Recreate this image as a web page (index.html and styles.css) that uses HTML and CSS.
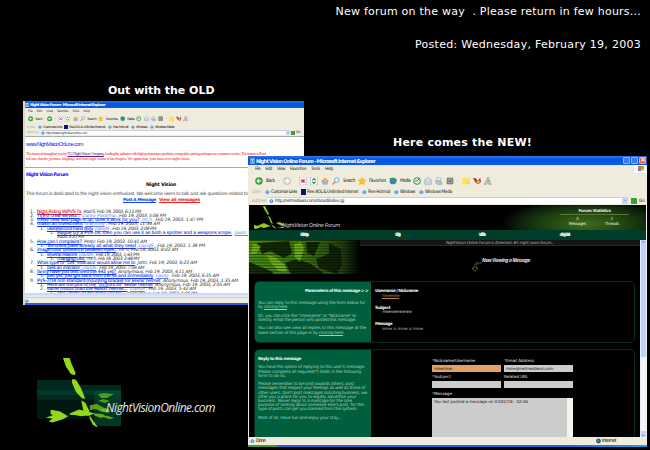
FILE: index.html
```html
<!DOCTYPE html>
<html lang="en">
<head>
<meta charset="utf-8">
<title>Night Vision Online</title>
<link rel="stylesheet" href="styles.css">
</head>
<body>
<svg class="defs" width="0" height="0">
  <defs>
    <symbol id="ie" viewBox="0 0 10 10"><rect x="1" width="8" height="10" fill="#e8f2fc"/><circle cx="4.8" cy="5.3" r="3" fill="none" stroke="#287ed0" stroke-width="1.8"/><path d="M2 5.5h6" stroke="#287ed0" stroke-width="1.3"/></symbol>
    <symbol id="back" viewBox="0 0 10 10"><circle cx="5" cy="5" r="4.7" fill="#36a23a"/><path d="M8 5H3M5.2 2.6L2.8 5l2.4 2.4" fill="none" stroke="#fff" stroke-width="1.4"/></symbol>
    <symbol id="fwd" viewBox="0 0 10 10"><circle cx="5" cy="5" r="4.4" fill="#dcdcd4" stroke="#aaa" stroke-width=".7"/><path d="M2 5h5M5 2.6L7.4 5 5 7.4" fill="none" stroke="#fff" stroke-width="1.4"/></symbol>
    <symbol id="stop" viewBox="0 0 10 10"><path d="M1 0h8v10H1z" fill="#fff" stroke="#8aa6d8" stroke-width=".7"/><path d="M3 3l4 4M7 3L3 7" stroke="#d8301c" stroke-width="1.8"/></symbol>
    <symbol id="refresh" viewBox="0 0 10 10"><path d="M1 0h8v10H1z" fill="#fff" stroke="#8aa6d8" stroke-width=".7"/><path d="M3 4l2-2 2 2M7 6L5 8 3 6" fill="none" stroke="#2a9a38" stroke-width="1.7"/></symbol>
    <symbol id="home" viewBox="0 0 10 10"><path d="M1.5 5h7v4.5h-7z" fill="#8fb5ea"/><path d="M0 5.5L5 .8l5 4.7-2 1-3-3-3 3z" fill="#e89a34"/></symbol>
    <symbol id="find" viewBox="0 0 10 10"><circle cx="6" cy="3.8" r="3" fill="#dcecfb" stroke="#7c9cc4"/><path d="M3.8 6L.8 9.4" stroke="#c87a44" stroke-width="1.6"/></symbol>
    <symbol id="star" viewBox="0 0 10 10"><path d="M5 .2l1.4 3.2 3.5.3-2.7 2.3.9 3.6L5 7.8 1.9 9.6l.9-3.6L.1 3.7l3.5-.3z" fill="#fcc62e" stroke="#d89814" stroke-width=".5"/></symbol>
    <symbol id="media" viewBox="0 0 10 10"><circle cx="5" cy="5" r="4.2" fill="#3484c8"/><path d="M0 2l6-1-1 5zM5 6l5-4-1 4z" fill="#2c9c4a"/></symbol>
    <symbol id="hist" viewBox="0 0 10 10"><circle cx="5" cy="5" r="4" fill="#e2f4e4" stroke="#3a9a58" stroke-width="1.3"/><path d="M7.5 2.5L5 5H2.5" fill="none" stroke="#2c7a48" stroke-width="1.2"/></symbol>
    <symbol id="mail" viewBox="0 0 10 10"><path d="M1 4l4-3.5L9 4v5H1z" fill="#d4e6fa" stroke="#7499cb" stroke-width=".8"/><path d="M1 4l4 3 4-3" fill="none" stroke="#e1b260"/></symbol>
    <symbol id="print" viewBox="0 0 10 10"><path d="M2.5 0L7 1v4l-4.500-1z" fill="#e8effa" stroke="#8b9bb5" stroke-width=".6"/><path d="M1 4l7 1.500 1 3.500-6 .5L0 6.500z" fill="#b6bfd2" stroke="#8b9bb5" stroke-width=".6"/></symbol>
    <symbol id="edit" viewBox="0 0 10 10"><path d="M1.500 1.500h7v7h-7z" fill="#bbb" stroke="#555"/><path d="M3 4h4M3 6h4" stroke="#444"/></symbol>
    <symbol id="note" viewBox="0 0 10 10"><path d="M0 1h10v6L7 9.500H0z" fill="#fbe265"/><path d="M10 7H7v2.500" fill="#e4b42c"/></symbol>
    <symbol id="bird" viewBox="0 0 10 10"><path d="M0 1l4 1 2 3 3-4 1 5-3 3-4-2z" fill="#b8342a"/><circle cx="6.500" cy="6" r="2" fill="#f0bc38"/></symbol>
    <symbol id="man" viewBox="0 0 10 10"><path d="M4 1h2v3l3 5H6L5 6 3 9H0l4-5zM2 5h6" fill="none" stroke="#858585" stroke-width=".9"/></symbol>
    <symbol id="plant" viewBox="0 0 180 185">
      <g fill="#93d81d">
        <path d="M47 0h18l4 13 12 27-3 6-10-3-13-20z"/><path d="M72 56l10 2 13 22 12 29-9-1-16-17-11-25z"/>
        <path d="M96 113l11 7 10 20 3 14-10 1-9-16z"/><path d="M65 149l25-11 20 5 23 6-13 4-24 3-17-3-14-1z"/>
        <path d="M14 139l24 4 23 13-14 8-28 9-10-3 10-8-18-2 20-7-7-2z"/><path d="M119 155l14 20 8 12-14-8-9-18z"/>
        <path d="M119 127l19-4 16 9 18 6-5 7-19-3-14-5-15 3z" opacity=".65"/><path d="M131 149l22 1 10 7-15 4-19-8z" opacity=".7"/>
        <path d="M162 154l22 6-12 4-15-5z" opacity=".65"/>
      </g>
    </symbol>
  </defs>
</svg>

<main class="desk">
  <header class="notice">
    <p><span data-w="305.500">New forum on the way&nbsp; . Please return in few hours...</span></p>
    <p><span data-w="226">Posted: Wednesday, February 19, 2003</span></p>
  </header>
  <h2 class="cap cap-old"><span data-w="106.500">Out with the OLD</span></h2>
  <h2 class="cap cap-new"><span data-w="139">Here comes the NEW!</span></h2>

  <section class="win old">
    <div class="title"><svg><use href="#ie"/></svg><span data-w="75">Night Vision Forum - Microsoft Internet Explorer</span></div>
    <div class="chrome">
      <div class="menu"><span>File</span><span>Edit</span><span>View</span><span data-w="11">Favorites</span><span>Tools</span><span>Help</span></div>
      <div class="tools">
        <svg><use href="#back"/></svg><b data-w="7">Back</b><i>·</i><svg><use href="#back"/></svg><i>·</i><svg><use href="#stop"/></svg><svg><use href="#refresh"/></svg><svg><use href="#home"/></svg><svg><use href="#find"/></svg><b data-w="9">Search</b><svg><use href="#star"/></svg><b data-w="12">Favorites</b><svg><use href="#media"/></svg><b data-w="7">Media</b><svg><use href="#hist"/></svg><svg><use href="#mail"/></svg><svg><use href="#print"/></svg><svg><use href="#edit"/></svg><i>·</i><svg><use href="#note"/></svg><svg><use href="#bird"/></svg><svg><use href="#man"/></svg>
      </div>
      <div class="links"><em>Links</em><svg><use href="#ie"/></svg><span data-w="19">Customize Links</span><u></u><span data-w="36">Free AOL &amp; Unlimited Internet</span><svg><use href="#ie"/></svg><span data-w="15">Free Hotmail</span><svg><use href="#ie"/></svg><span data-w="11">Windows</span><svg><use href="#ie"/></svg><span data-w="19">Windows Media</span></div>
      <div class="addr"><em>Address</em><div class="url"><svg><use href="#ie"/></svg><span data-w="41">http://www.nightvisiononline.com</span></div><s>⌄</s><q></q><small>Go</small></div>
    </div>
    <div class="top-frame">
      <h3><span data-w="57">www.NightVisionOnLine.com</span></h3>
      <p><span data-w="240">The forum is brought to you by <a>TG Night Vision Company</a>, leading the industry with high performance products, competitive pricing and supreme customer service. The forum will not</span></p>
      <p><span data-w="164">tolerate slander, profane language and non night vision related topics. We appreciate your interest in night vision.</span></p>
    </div>
    <div class="main-frame">
      <h3><span data-w="42">Night Vision Forum</span></h3>
      <h4><span data-w="30">Night Vision</span></h4>
      <p class="intro"><span data-w="222">This forum is dedicated to the night vision enthusiast. We welcome users to talk and ask questions related to</span></p>
      <p class="acts"><a data-w="33">Post A Message</a><a class="red" data-w="41">View all messages</a></p>
      <ol class="thread">
        <li><b>1.</b><span data-w="104"><a class="red">Night Riding W/PVS-7a</a>&nbsp; Rod S, Feb 19, 2003, 6:13 PM</span></li>
        <li><b>2.</b><span data-w="129"><a>TVS-2 crew served...</a>&nbsp; <a class="who">Danny Postema</a> , Feb 19, 2003, 5:06 PM</span></li>
        <li><b>3.</b><span data-w="166"><a>USNV new web page is up, does it work for you?</a>&nbsp; <a class="who">mr h</a> , Feb 19, 2003, 1:47 PM</span></li>
        <li><b>4.</b><span data-w="123"><a>makin an investment</a>&nbsp; <a class="who">d whitley</a> , Feb 19, 2003, 11:34 AM</span></li>
        <li class="l2"><b>1.</b><span data-w="109"><a>used/second hand NVG</a>&nbsp; <a class="who">DavidS</a> , Feb 19, 2003, 2:08 PM</span></li>
        <li class="l3"><b>1.</b><span data-w="194"><a>Maybe try a PVS-14, then you can use it as both a spotter and a weapons scope.</a>&nbsp; <a class="who">Jason H</a></span></li>
        <li class="l3"><b></b><span data-w="27">2003, 2:21 PM</span></li>
        <li><b>5.</b><span data-w="110"><a>How can I complaint?</a>&nbsp; Peter, Feb 19, 2003, 10:41 AM</span></li>
        <li class="l2"><b>1.</b><span data-w="158"><a>Terrorists have already all what they need</a>&nbsp; <a class="who">DavidS</a> , Feb 19, 2003, 1:39 PM</span></li>
        <li><b>6.</b><span data-w="141"><a>image color difference between eyes..</a>&nbsp; mr h, Feb 19, 2003, 8:02 AM</span></li>
        <li class="l2"><b>1.</b><span data-w="92"><a>several reasons</a>&nbsp; <a class="who">DavidS</a> , Feb 19, 2003, 1:43 PM</span></li>
        <li class="l3"><b>1.</b><span data-w="82"><a>changing color..</a>&nbsp; mr h, Feb 19, 2003, 2:48 PM</span></li>
        <li><b>7.</b><span data-w="160"><a>What type of "ON" indicator would allow me to</a>&nbsp; John, Feb 19, 2003, 6:23 AM</span></li>
        <li class="l2"><b>1.</b><span data-w="97"><a>best an indicator</a>&nbsp; <a class="who">DavidS</a> , Feb 19, 2003, 7:04 AM</span></li>
        <li><b>8.</b><span data-w="155"><a>fanny have you text fired the 442 yet?</a>&nbsp; Anonymous, Feb 19, 2003, 4:11 AM</span></li>
        <li class="l2"><b>1.</b><span data-w="172"><a>Just yet, just got back from the SS and immediately</a>&nbsp; <a class="who">Lanny</a> , Feb 19, 2003, 6:35 AM</span></li>
        <li><b>9.</b><span data-w="201"><a>PVS-7/14 non standard mounting bracket for kevlar helmet</a>&nbsp; Anonymous, Feb 19, 2003, 1:35 AM</span></li>
        <li class="l2"><b>1.</b><span data-w="183"><a>Here are the pics of the "no front lid" kevlar helmet</a>&nbsp; Anonymous, Feb 19, 2003, 2:05 AM</span></li>
        <li class="l2"><b>2.</b><span data-w="149"><a>same mount than the PASGT helmet...</a>&nbsp; <a class="who">DavidS</a> , Feb 19, 2003, 5:42 AM</span></li>
        <li class="l3"><b>1.</b><span data-w="140"><a>They don't use the same one for...</a>&nbsp; Anonymous, Feb 19, 2003, 6:06 PM</span></li>
      </ol>
    </div>
    <div class="hscroll"></div>
    <div class="status"><svg><use href="#ie"/></svg></div>
  </section>

  <section class="win new">
    <div class="title"><svg><use href="#ie"/></svg><span data-w="119">Night Vision Online Forum - Microsoft Internet Explorer</span><div class="btns"><i></i><i></i><i class="x">×</i></div></div>
    <div class="chrome">
      <div class="menu"><span data-w="5.500">File</span><span data-w="6.500">Edit</span><span data-w="8">View</span><span data-w="16">Favorites</span><span data-w="9">Tools</span><span data-w="8">Help</span><div class="flag"><k></k><k></k><k></k><k></k></div></div>
      <div class="tools">
        <svg><use href="#back"/></svg><b data-w="9">Back</b><i>·</i><svg><use href="#fwd"/></svg><i></i><svg><use href="#stop"/></svg><svg><use href="#refresh"/></svg><svg><use href="#home"/></svg><svg><use href="#find"/></svg><b data-w="12">Search</b><svg><use href="#star"/></svg><b data-w="17">Favorites</b><svg><use href="#media"/></svg><b data-w="10">Media</b><svg><use href="#hist"/></svg><svg><use href="#mail"/></svg><svg><use href="#print"/></svg><svg><use href="#edit"/></svg><i>·</i><svg><use href="#note"/></svg><svg><use href="#bird"/></svg><svg><use href="#man"/></svg>
      </div>
      <div class="links"><em data-w="9">Links</em><svg><use href="#ie"/></svg><span data-w="26">Customize Links</span><u></u><span data-w="51">Free AOL &amp; Unlimited Internet</span><svg><use href="#ie"/></svg><span data-w="22">Free Hotmail</span><svg><use href="#ie"/></svg><span data-w="15">Windows</span><svg><use href="#ie"/></svg><span data-w="27">Windows Media</span></div>
      <div class="addr"><em data-w="14">Address</em><div class="url"><svg><use href="#ie"/></svg><span data-w="69">http://netmediasol.com/nboard/index.cgi</span></div><s>⌄</s><q></q><small>Go</small></div>
    </div>
    <div class="page">
      <div class="banner">
        <svg class="sprig" viewBox="0 0 38 25"><g fill="#8ccc22"><path d="M14 1h2l4 8-1 1-4-6zM19 11l2 1 3 7-2-1zM22 19l4 3 1 2-3-2zM8 21l7-3 4 2 3 1-7 2zM5 20l5 1 1 2-5 1-1-1zM27 18l4-1 5 3-3 1zM28 22l6 0 2 1-3 0z"/></g></svg>
        <span class="hand" data-w="58">NightVision Online Forum</span>
        <div class="stats"><p class="st"><span data-w="32">Forum Statistics</span></p><div><p>3<br><span data-w="17">Messages</span></p><p>2<br><span data-w="14">Threads</span></p></div></div>
      </div>
      <nav><span data-w="45">Home / View Messages</span><span data-w="36">Post New Message</span><span data-w="41">Website Information</span><span data-w="32">Advertising Info</span></nav>
      <div class="body">
        <div class="canvas">
          <div class="ticker"><span data-w="108">NightVision Online Forum is America's #1 night vision forum...</span></div>
          <div class="hero">
            <svg class="photo" viewBox="0 0 111 34"><defs><linearGradient id="g"><stop offset="0" stop-color="#4c9210"/><stop offset=".55" stop-color="#3a7010"/><stop offset=".83" stop-color="#234510"/><stop offset="1" stop-color="#000"/></linearGradient><pattern id="p" width="4" height="2.800" patternUnits="userSpaceOnUse"><path d="M0 .5h4" stroke="#000" stroke-width="1" opacity=".5"/></pattern></defs><path d="M0 0h111v34H0z" fill="url(#g)"/><path d="M8 3L40 1l3 12-8 5-14-7-8 3zM0 22l22 9 3 3H0zM36 23l12-4 14 5 14 10H42zM57 2h14l-6 14-7-3zM80 3l12 6 1 16-5 9-18-6-3-9 13-5z" fill="#0a1c02" opacity=".85"/><path d="M18 15l8 2 10 8 2 7-8-1-9-9zM45 4l7-2 3 6-4 14-5-4zM4 3l8 3-4 7-6 2z" fill="#7cc41c" opacity=".8"/><path d="M0 0h111v34H0z" fill="url(#p)"/></svg>
            <svg class="arrow" viewBox="0 0 12 10"><path d="M11 1Q5 0 5 6H7L4 9.500 1 6H3Q3 .5 7 .500" fill="none" stroke="#53651a" stroke-width=".9"/></svg>
            <span class="viewing" data-w="48">Now Viewing a Message</span>
          </div>
          <div class="panel p1">
            <div class="side">
              <h5><span data-w="63">Parameters of this message &gt; &gt;</span></h5>
              <p><span data-w="107">You can reply to this message using the form below for</span><br><span data-w="30">by <a>clicking here</a>.</span></p>
              <p><span data-w="98">Or, you can click the "Username" or "Nickname" to</span><br><span data-w="98">directly email the person who posted this message.</span></p>
              <p><span data-w="108">You can also see view all replies to this message at the</span><br><span data-w="86">lower section of this page or by <a>clicking here</a>.</span></p>
            </div>
            <div class="info">
              <h6><span data-w="43">Username / Nickname</span></h6><p><a data-w="17">minemine</a></p>
              <h6><span data-w="15">Subject</span></h6><p><span data-w="29">minemineminemine</span></p>
              <h6><span data-w="17">Message</span></h6><p><span data-w="41">mine is mine is mine</span></p>
            </div>
          </div>
          <div class="panel p2">
            <div class="side">
              <h5><span data-w="43">Reply to this message</span></h5>
              <p><span data-w="107">You have the option of replying to this user's message.</span><br><span data-w="103">Please complete all required(*) fields in the following</span><br><span data-w="28">form to do so.</span></p>
              <p><span data-w="96">Please remember to be kind towards others, post</span><br><span data-w="107">messages that respect your feelings as well as those of</span><br><span data-w="109">other users. Don't post messages soliciting business, we</span><br><span data-w="98">offer you a place for you to legally advertise your</span><br><span data-w="94">business. Never reply to a message for the sole</span><br><span data-w="106">purpose of ranting about someone else's post, for this</span><br><span data-w="99">type of posts can get you banned from the system.</span></p>
              <p><span data-w="83">Most of all, Have fun and enjoy your stay...</span></p>
            </div>
            <div class="form">
              <label><span data-w="43"><i>*</i>Nickname/Username</span><div class="in hot"><span data-w="18">minemine</span></div></label>
              <label><span data-w="30"><i>*</i>Email Address</span><div class="in"><span data-w="47">mine@netmediasol.com</span></div></label>
              <label><span data-w="19"><i>*</i>Subject</span><div class="in"></div></label>
              <label><span data-w="24">Related URL</span><div class="in"></div></label>
              <label class="wide"><span data-w="20"><i>*</i>Message</span><div class="area"><span data-w="94">You last posted a message on 03/02/18 - 02:06</span></div></label>
            </div>
          </div>
        </div>
        <div class="vscroll"><i>⌃</i><i>⌄</i></div>
      </div>
    </div>
    <div class="status"><svg><use href="#ie"/></svg><span data-w="9">Done</span><svg class="globe" viewBox="0 0 10 10"><circle cx="5" cy="5" r="4.800" fill="#174c94"/><path d="M2 2l4-1 1 3-3 4-2-2zM7 5l2 0-1 3z" fill="#37a043"/></svg><span data-w="14">Internet</span></div>
  </section>

  <div class="logo">
    <svg viewBox="0 0 84 69"><path d="M0 22h39v5h45v41H57V61H0z" fill="#00180f"/><path d="M0 22h39v5h45v15H0z" fill="#00281c"/><path d="M0 32h84v5H0z" fill="#00382a"/><path d="M57 33h27v35H57z" fill="#02553a" opacity=".5"/><path d="M61 36l6-1 10 1-7 4h-6zM61 43l5-2 7 2-5 2zM62 53l5-2 7 2-3 2z" fill="#4d9a1f"/><svg x="0" y="0" width="60" height="61.700"><use href="#plant"/></svg></svg>
    <span class="hand" data-w="109">NightVisionOnline.com</span>
  </div>
</main>
<script src="fit.js"></script>
</body>
</html>
```
FILE: fit.js
```js
// Track each line of text out or in so that it fills its declared measure.
document.querySelectorAll('[data-w]').forEach(function (el) {
  var want = parseFloat(el.dataset.w);
  var n = el.textContent.length;
  el.style.letterSpacing = '0px';
  var have = el.getBoundingClientRect().width;
  el.style.letterSpacing = ((want - have) / n).toFixed(4) + 'px';
});
```
FILE: styles.css
```css
* { box-sizing: border-box; }
body { margin: 0; background: #000; font-family: "DejaVu Sans", Verdana, sans-serif; }
h2, h3, h4, h5, h6, p, ol { margin: 0; padding: 0; font-weight: normal; }
svg { display: block; flex: none; overflow: visible; }
.defs { position: absolute; }
.desk { position: relative; width: 650px; height: 450px; overflow: hidden; white-space: nowrap; }
.desk i, .desk em { font-style: normal; }
.desk a { text-decoration: underline; }

.notice { padding: 3px 9px 0 0; text-align: right; color: #fff; font-size: 11px; line-height: 17px; }
.notice p + p { margin-top: 16px; }
.cap { position: absolute; color: #fff; font-size: 11px; line-height: 14px; font-weight: bold; }
.cap-old { left: 108px; top: 84px; }
.cap-new { left: 393px; top: 136px; }

.win { position: absolute; display: flex; flex-direction: column; overflow: hidden; }
.title { display: flex; align-items: center; flex: none; color: #fff; font-weight: bold; background: linear-gradient(#2a76ee, #0653dc 40%, #0a5cf0); }
.chrome { flex: none; background: #efecdd; color: #222; font-family: "DejaVu Sans Condensed", "DejaVu Sans", sans-serif; }
.chrome > div { display: flex; align-items: center; }
.tools b { font-weight: normal; }
.links u { background: #0a1478; }
.addr .url { display: flex; align-items: center; flex: 1; height: 100%; background: #fff; border-top: 1px solid #c8d0d8; }
.addr s { text-decoration: none; background: #c4d4fa; color: #446; height: 100%; text-align: center; overflow: hidden; }
.addr q { background: #35a03c; quotes: none; }
.addr em, .links em { color: #aaa; }
.status { display: flex; align-items: center; flex: none; background: #efecdd; }

/* Old forum window */
.old { left: 23px; top: 101px; width: 281px; height: 204px; background: #fff; border-left: 2px solid #ddd9cc; font-size: 4px; line-height: 5px; }
.old .title { height: 7px; font-size: 3.800px; }
.old .title svg { width: 4px; height: 4px; margin-right: 1px; }
.old .menu { height: 6px; padding-left: 3px; gap: 4px; font-size: 3.200px; }
.old .tools { height: 10px; gap: 2px; padding-left: 3px; font-size: 3.500px; }
.old .tools svg { width: 5.400px; height: 5.400px; }
.old .links { height: 6px; gap: 1px; padding-left: 2px; font-size: 3.500px; }
.old .links svg { width: 4px; height: 4px; margin-left: 2px; }
.old .links u { width: 4px; height: 4px; margin-left: 1px; }
.old .addr { height: 6px; padding: 0 0 1px 2px; font-size: 3.300px; }
.old .addr .url { margin-left: 2px; }
.old .addr .url svg { width: 4px; height: 4px; margin-right: 1px; }
.old .addr s { width: 4px; }
.old .addr q { width: 4px; height: 4px; margin: 0 1px; }
.old .addr small { width: 8px; font-size: 3.500px; }
.old .top-frame { height: 32px; flex: none; padding: 4px 1px 0; border-top: 1px solid #aaa; border-bottom: 1px solid #aaa; }
.old h3 { color: #1414f0; font: 5.500px/6px "Liberation Sans", sans-serif; }
.old .top-frame p { color: #f22; font: 4.300px/4.500px "Liberation Serif", serif; }
.old .top-frame h3 { margin-bottom: 5px; }
.old .top-frame a { color: #528; }
.old .main-frame { height: 125px; flex: none; overflow: hidden; padding: 4px 1px 0; }
.old .main-frame h3 { font: bold 4.800px/6px "DejaVu Sans", sans-serif; }
.old h4 { margin: 4px 0 0 120px; font-weight: bold; font-size: 4.800px; line-height: 6px; }
.intro { margin-top: 3px; font-size: 4.600px; line-height: 5px; color: #444; }
.acts { display: flex; gap: 3px; margin: 1px 0 0 97px; font-weight: bold; font-size: 4.300px; line-height: 6px; color: #1446f0; }
.desk a.red { color: #f02020; }
.thread { list-style: none; padding-top: 6.500px; font-size: 4.600px; line-height: 4.340px; color: #333; font-style: italic; }
.thread li { display: flex; height: 4.340px; padding-left: 4px; }
.thread li b { width: 7px; font-weight: normal; font-style: normal; }
.thread .l2 { padding-left: 14px; }
.thread .l3 { padding-left: 24px; }
.thread a { color: #1238f4; font-style: normal; -webkit-text-stroke: .1px #1238f4; }
.thread a.red { -webkit-text-stroke-color: #f02020; }
.thread a.who { color: #6480ee; font-style: italic; -webkit-text-stroke: 0; }
.hscroll { height: 4px; flex: none; background: linear-gradient(#c2d2fa, #e6eeff); }
.old .status { height: 8px; border-bottom: 2px solid #1e64e0; border-top: 1px solid #ccc; }
.old .status svg { width: 4px; height: 4px; }

/* New forum window */
.new { left: 248px; top: 156px; width: 399px; height: 291px; background: #efecdd; font-size: 4.500px; line-height: 6px; }
.new .title { height: 9px; padding: 0 1px 0 2px; font-size: 5.200px; }
.new .title svg { width: 5px; height: 6px; margin-right: 1px; }
.btns { display: flex; gap: 1px; margin-left: auto; }
.btns i { width: 7px; height: 7px; background: #3b7af4; border: 1px solid #8db1f5; border-radius: 1px; }
.btns .x { background: #e25a35; border-color: #f3a68c; font-size: 7px; line-height: 5px; text-align: center; }
.new .menu { height: 8px; padding-left: 7px; gap: 5px; font-size: 4.600px; }
.flag { display: grid; grid-template-columns: 3px 3px; grid-auto-rows: 2.500px; width: 13px; height: 8px; margin-left: auto; padding: 1px 4px; background: #fff; }
.flag k { background: #e2683a; }
.flag k:nth-child(2) { background: #7dbb48; }
.flag k:nth-child(3) { background: #4b87e0; }
.flag k:nth-child(4) { background: #f2c53c; }
.new .tools { height: 15px; padding-left: 7px; font-size: 4.800px; gap: 3px; }
.new .tools svg { width: 8px; height: 8px; }
.new .tools i { width: 2px; }
.new .links { height: 8px; gap: 1px; padding-left: 4px; font-size: 4.700px; }
.new .links svg, .new .links u { width: 5px; height: 6px; margin-left: 3px; }
.new .addr { height: 9px; padding: 1px 0 1px 4px; font-size: 4.600px; }
.new .url { margin-left: 2px; }
.new .url svg { width: 5px; height: 6px; margin: 0 1px; }
.new .addr s { width: 6px; }
.new .addr q { width: 6px; height: 6px; margin: 0 2px 0 3px; }
.new .addr small { width: 8px; font-size: 4.500px; }
.page { height: 232px; flex: none; margin-left: 1px; background: #000; border-right: 1px solid #f0f0f0; color: #e0e0e0; overflow: hidden; }
.banner { display: flex; height: 25px; background: radial-gradient(ellipse 85px 26px at 337px 19px, #3d6c1a, #1d4210 50%, #0c1e0c 80%, transparent); background-repeat: no-repeat; }
.sprig { width: 38px; height: 25px; }
.hand { color: #ddd; font-family: "Open Sans", sans-serif; font-style: italic; }
.banner .hand { margin: 16px 0 0 -5px; font-size: 5.800px; line-height: 8px; align-self: flex-start; }
.stats { width: 69px; margin: 4px 17px 0 auto; text-align: center; font-size: 4.200px; line-height: 4.400px; }
.st { font-weight: bold; padding-bottom: 1px; margin-bottom: 2px; border-bottom: 1px solid #55763a; }
.stats div { display: flex; }
.stats div p { width: 50%; }
nav { display: grid; grid-template-columns: 148px 55px 163px 0; height: 10px; background: #003d2a; align-items: center; font-weight: bold; font-size: 4.500px; }
nav { grid-template-columns: 51px 97px 97px 88px; padding-left: 51px; grid-template-columns: 96.500px 82px 88px 1fr; }
.body { display: flex; height: 197px; }
.canvas { flex: 1; overflow: hidden; }
.ticker { height: 6px; padding-left: 197px; background: #151515; border-bottom: 1px solid #292929; font-size: 4.100px; line-height: 5.500px; color: #aaa; }
.hero { display: flex; height: 34px; margin-top: -6px; margin-bottom: 7px; }
.photo { width: 111px; height: 34px; }
.arrow { width: 12px; height: 10px; margin: 22px 0 0 111px; }
.viewing { margin: 17px 0 0 -1px; font: bold italic 4.800px/6px "Open Sans", sans-serif; align-self: flex-start; }
.panel { display: flex; width: 381px; margin-left: 5px; border: 1px solid #06291e; border-radius: 5px; overflow: hidden; }
.p1 { height: 62px; }
.p2 { height: 100px; margin-top: 6px; }
.side { width: 116px; flex: none; background: #00603e; color: #a4cbb8; padding: 0 3px; font-size: 4.300px; line-height: 4.200px; }
.side h5 { font-weight: bold; color: #e4f0ea; font-size: 4.300px; line-height: 4.200px; }
.p1 h5 { text-align: right; padding: 7px 0 8px; }
.p1 .side p { margin-bottom: 4.200px; }
.p2 h5 { padding-top: 7px; }
.p2 .side p { margin-top: 4.200px; }
.info { padding: 7px 0 0 4px; font-size: 4.100px; line-height: 4.500px; color: #bbb; }
.info h6 { font-weight: bold; font-size: 4.300px; line-height: 4.500px; color: #eee; }
.info p { padding-left: 7px; margin-bottom: 7.700px; }
.info a { color: #b4854c; }
.form { display: grid; grid-template-columns: 69px 69px; column-gap: 3px; align-content: start; margin: 8px 0 0 61px; font-size: 4.100px; line-height: 5px; }
.form label { display: flex; flex-direction: column; align-items: flex-start; height: 16.300px; }
.form i { color: #e4b64c; }
.in { width: 69px; height: 7px; margin-top: 2px; padding-left: 2px; background: #ccc; color: #222; line-height: 7px; }
.in.hot { background: #e3a162; }
.form .wide { grid-column: span 2; }
.area { width: 141px; height: 60px; flex: none; margin-top: 2px; padding: 1px 2px; background: linear-gradient(90deg, #ccc 135px, #f4f4ee 135px); color: #222; }
.vscroll { display: flex; flex-direction: column; justify-content: space-between; width: 6px; background: linear-gradient(#bfd0fa 117px, #f5f4ee 117px); border-left: 1px solid #e4ebff; }
.vscroll i { height: 6px; background: #bfd0fa; color: #345; font-size: 5px; }
.new .status { height: 10px; padding-left: 2px; font-size: 4.800px; border-bottom: 2px solid #2764e4; border-image: linear-gradient(90deg, #379a3c 32px, #2463e4 32px, #2463e4 80%, #12a5ee) 2; border-style: solid; border-width: 0 0 2px; }
.new .status svg { width: 5px; height: 6px; margin-right: 1px; }
.new .status .globe { margin-left: 134.500px; margin-left: auto; }
.new .status span:last-child { margin-right: 31px; }

/* Site logo */
.logo { position: absolute; left: 37px; top: 358px; display: flex; }
.logo svg { width: 84px; height: 69px; }
.logo .hand { margin: 42px 0 0 -15px; font-size: 12px; line-height: 16px; align-self: flex-start; color: #e4e8e6; }
```
